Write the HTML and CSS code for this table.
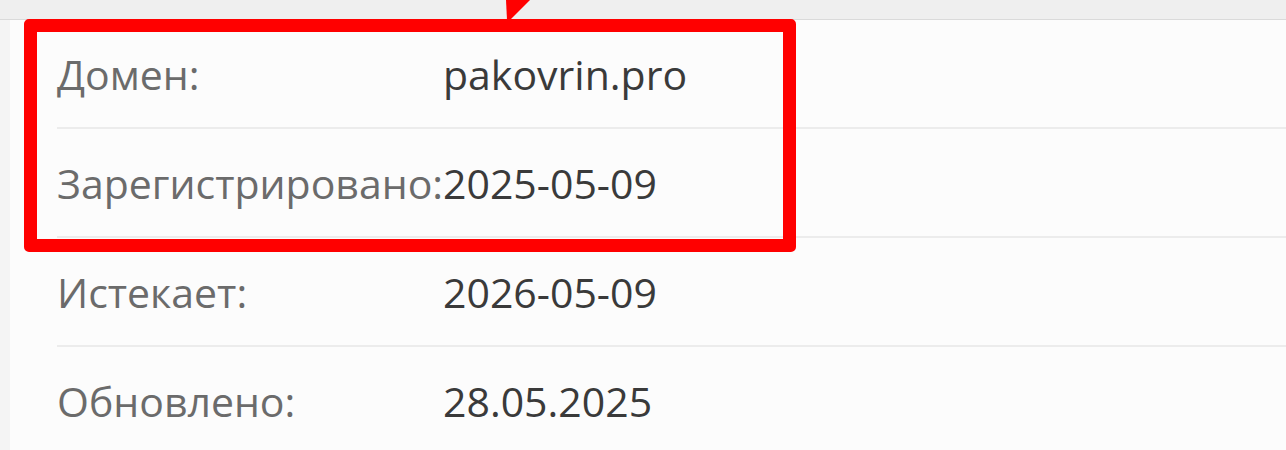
FILE: index.html
```html
<!DOCTYPE html>
<html lang="ru">
<head>
<meta charset="utf-8">
<title>Домен</title>
<link rel="stylesheet" href="styles.css">
</head>
<body>
<div class="page">
  <div class="topbar"></div>
  <div class="card">
    <div class="row"><span class="label">Домен:</span><span class="value">pakovrin.pro</span></div>
    <div class="row"><span class="label">Зарегистрировано:</span><span class="value">2025-05-09</span></div>
    <div class="row"><span class="label">Истекает:</span><span class="value">2026-05-09</span></div>
    <div class="row"><span class="label">Обновлено:</span><span class="value">28.05.2025</span></div>
  </div>
  <div class="highlight"></div>
  <svg class="arrow" width="40" height="22" viewBox="0 0 40 22"><polygon points="0,0 24,0 4,20 1,20" fill="#ff0000"/></svg>
</div>
</body>
</html>
```
FILE: styles.css
```css
html, body {
  margin: 0;
  padding: 0;
}
body {
  background: #f4f4f4;
  font-family: "Open Sans", "Liberation Sans", sans-serif;
  overflow: hidden;
}
.page {
  position: relative;
  width: 1286px;
  height: 450px;
  overflow: hidden;
}
.topbar {
  height: 19px;
  background: #efefef;
  border-bottom: 1px solid #dadada;
}
.card {
  margin-left: 10px;
  background: #fcfcfc;
  padding-left: 47px;
  height: 430px;
}
.row {
  display: grid;
  grid-template-columns: 386px 1fr;
  align-items: center;
  height: 107px;
  border-bottom: 2px solid #ececec;
  font-size: 41px;
}
.label {
  color: #6b6b6b;
  white-space: nowrap;
}
.value {
  color: #3a3a3a;
  white-space: nowrap;
}
.highlight {
  position: absolute;
  left: 24px;
  top: 19px;
  width: 772px;
  height: 233px;
  box-sizing: border-box;
  border: 13px solid #ff0000;
  border-radius: 5px;
}
.arrow {
  position: absolute;
  left: 506px;
  top: 0;
}
```
